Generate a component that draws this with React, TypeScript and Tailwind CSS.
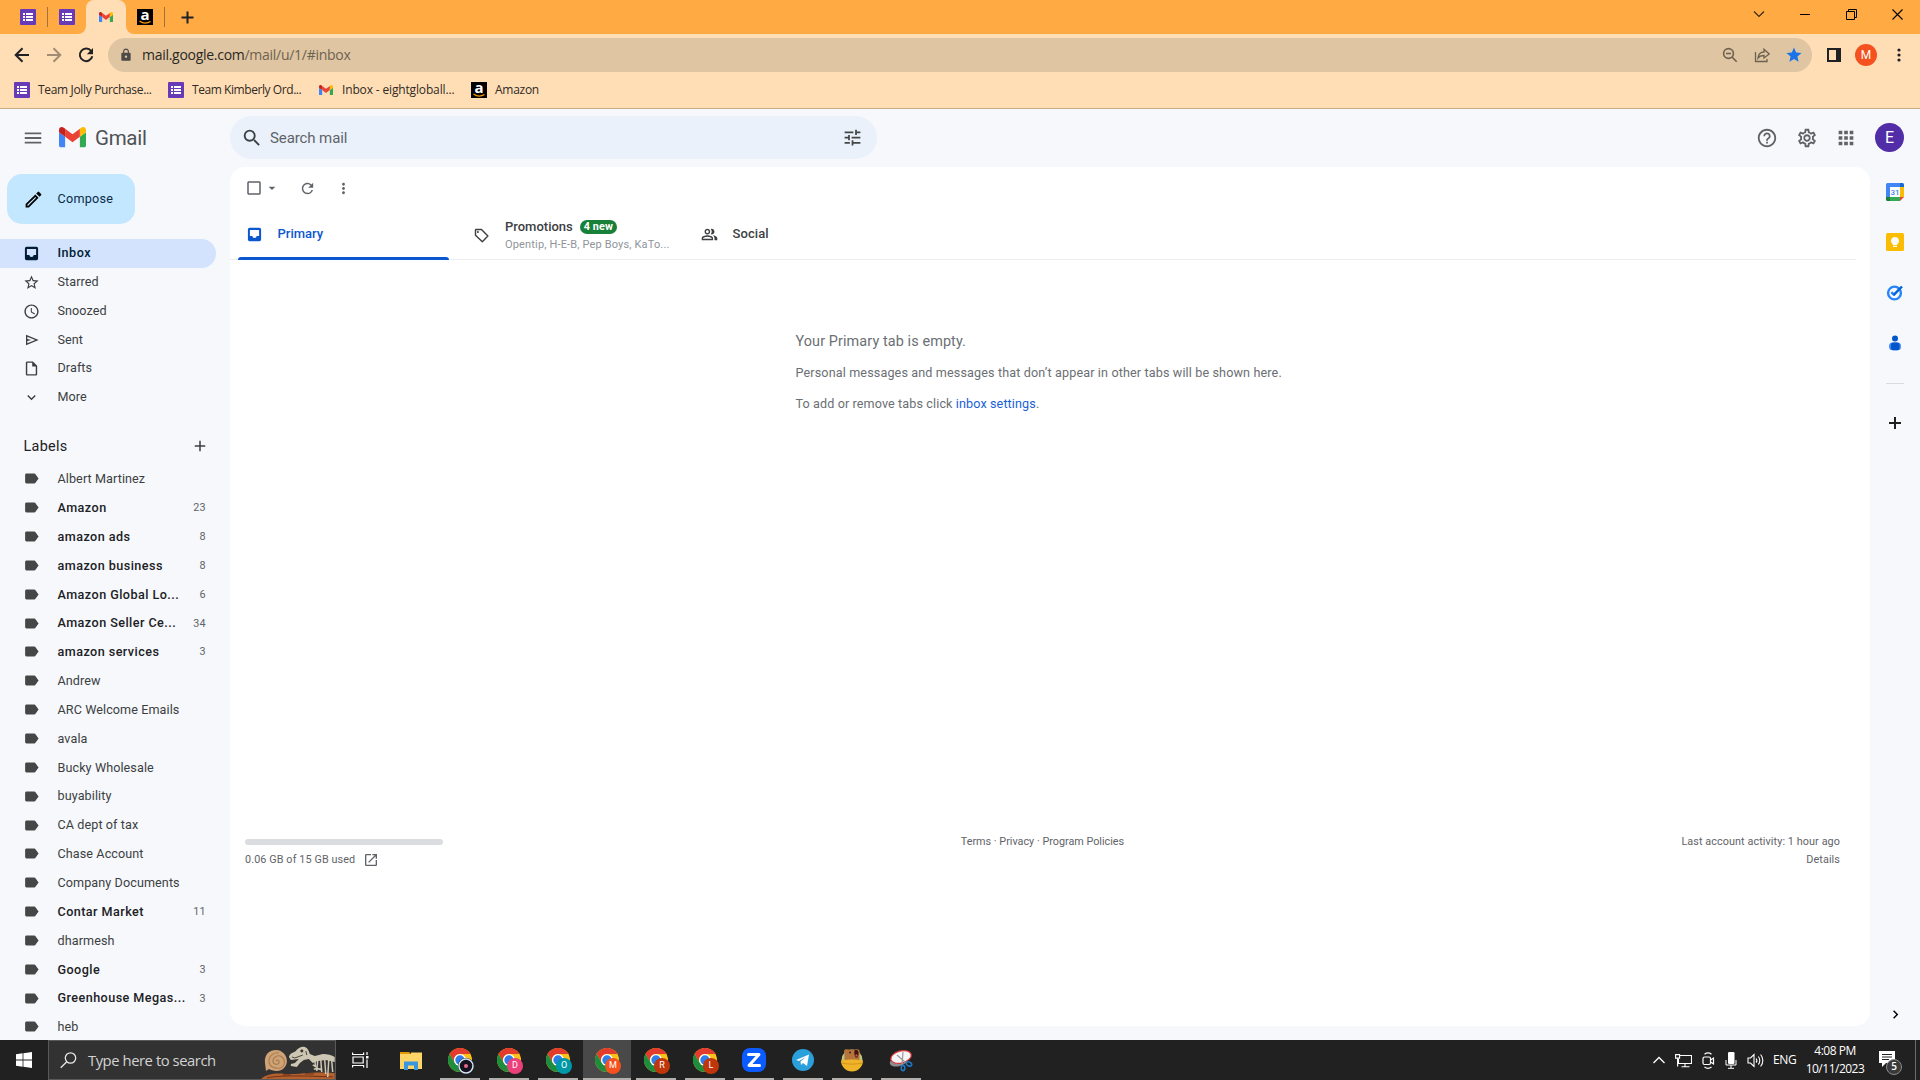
import { clsx } from "clsx";
import type { ReactNode } from "react";
import {
  MdAdd,
  MdApps,
  MdArrowDropDown,
  MdCheckBoxOutlineBlank,
  MdChevronRight,
  MdExpandMore,
  MdHelpOutline,
  MdLabel,
  MdLock,
  MdMenu,
  MdMoreVert,
  MdOutlineInsertDriveFile,
  MdOutlinePeopleAlt,
  MdOutlineSettings,
  MdRefresh,
  MdSearch,
  MdOutlineSchedule,
  MdStar,
  MdStarBorder,
  MdTune,
  MdOpenInNew,
  MdOutlineModeEdit,
} from "react-icons/md";

interface Label {
  name: string;
  count?: number;
}

const labels: Label[] = [
  { name: "Albert Martinez" },
  { name: "Amazon", count: 23 },
  { name: "amazon ads", count: 8 },
  { name: "amazon business", count: 8 },
  { name: "Amazon Global Lo...", count: 6 },
  { name: "Amazon Seller Ce...", count: 34 },
  { name: "amazon services", count: 3 },
  { name: "Andrew" },
  { name: "ARC Welcome Emails" },
  { name: "avala" },
  { name: "Bucky Wholesale" },
  { name: "buyability" },
  { name: "CA dept of tax" },
  { name: "Chase Account" },
  { name: "Company Documents" },
  { name: "Contar Market", count: 11 },
  { name: "dharmesh" },
  { name: "Google", count: 3 },
  { name: "Greenhouse Megas...", count: 3 },
  { name: "heb" },
];

const folders = [
  { name: "Starred", icon: <MdStarBorder size={17} /> },
  { name: "Snoozed", icon: <MdOutlineSchedule size={17} /> },
  { name: "Sent", icon: <SendIcon /> },
  { name: "Drafts", icon: <MdOutlineInsertDriveFile size={17} /> },
  { name: "More", icon: <MdExpandMore size={17} /> },
];

const chromeProfiles = [
  { letter: "", color: "#15131f" },
  { letter: "D", color: "#ec407a" },
  { letter: "O", color: "#0097a7" },
  { letter: "M", color: "#f4511e", active: true },
  { letter: "R", color: "#bf360c" },
  { letter: "L", color: "#bf360c" },
];

export default function App() {
  return (
    <div className="flex h-[1080px] w-[1920px] flex-col overflow-hidden bg-[#f6f8fc] font-[Roboto,sans-serif]">
      <TabStrip />
      <Toolbar />
      <BookmarkBar />
      <div className="flex h-[931px] flex-col overflow-hidden">
        <GmailHeader />
        <div className="flex h-[873px]">
          <Sidebar />
          <MailPanel />
          <SidePanel />
        </div>
      </div>
      <Taskbar />
    </div>
  );
}

/* ---------- browser chrome ---------- */

function TabStrip() {
  return (
    <div className="flex h-[34px] shrink-0 items-start justify-between bg-[#ffaa42]">
      <div className="flex h-[34px] items-center">
        <div className="ml-5 w-4">
          <FormsIcon />
        </div>
        <div className="ml-[11px] h-5 w-px bg-[#a07440]" />
        <div className="ml-[11px] w-4">
          <FormsIcon />
        </div>
        <div className="relative ml-[11px] flex h-[34px] w-10 items-center justify-center rounded-t-lg bg-[#ffdeb6]">
          <svg className="absolute bottom-0 -left-2" width="8" height="8">
            <path d="M8 0v8H0a8 8 0 0 0 8-8" fill="#ffdeb6" />
          </svg>
          <GmailLogo width={14} />
          <svg className="absolute -right-2 bottom-0" width="8" height="8">
            <path d="M0 0v8h8a8 8 0 0 1-8-8" fill="#ffdeb6" />
          </svg>
        </div>
        <div className="ml-[11px]">
          <AmazonIcon />
        </div>
        <div className="ml-[11px] h-5 w-px bg-[#a07440]" />
        <svg className="ml-[15.500px]" width="13" height="13" stroke="#202124" strokeWidth="2">
          <path d="M6.500 .5v12M.5 6.500h12" />
        </svg>
      </div>
      <div className="mr-[17px] flex h-7 items-center text-black">
        <svg width="12" height="12" fill="none" stroke="#3b2a12" strokeWidth="1.200">
          <path d="M1 3.500l5 5 5-5" />
        </svg>
        <svg className="ml-[35px]" width="10" height="10" stroke="#000">
          <path d="M0 5.500h10" />
        </svg>
        <svg className="ml-9" width="11" height="11" fill="none" stroke="#000">
          <path d="M.5 2.500h8v8h-8zM2.500 2.500v-2h8v8h-2" />
        </svg>
        <svg className="ml-[35px]" width="11" height="11" stroke="#000" strokeWidth="1.100">
          <path d="M.5 .5l10 10M10.500 .5l-10 10" />
        </svg>
      </div>
    </div>
  );
}

function Toolbar() {
  return (
    <div className="flex h-[42px] shrink-0 items-center bg-[#ffdeb6]">
      <svg className="ml-3.5" width="16" height="16" fill="none" stroke="#202124" strokeWidth="2">
        <path d="M15 8H2M8.500 1.200L1.700 8l6.800 6.800" />
      </svg>
      <svg className="ml-4" width="16" height="16" fill="none" stroke="#a18c73" strokeWidth="2">
        <path d="M1 8h13M7.500 1.200L14.300 8l-6.800 6.800" />
      </svg>
      <svg className="ml-4" width="16" height="16" fill="none" stroke="#202124" strokeWidth="2">
        <path d="M13.200 4A6.300 6.300 0 1 0 14.300 9.300" />
        <path d="M15 1v6.200H8.800z" fill="#202124" stroke="none" />
      </svg>
      <div className="ml-[14px] flex h-[34px] w-[1704px] items-center rounded-full bg-[#dfc5a1] pr-[9px] pl-[11px]">
        <MdLock size={14} className="text-[#4d4a47]" />
        <p className="ml-[9px] flex-1 font-['Open_Sans',sans-serif] text-sm tracking-[-0.280px] text-[#2a2825]">
          mail.google.com<span className="text-[#6d6252]">/mail/u/1/#inbox</span>
        </p>
        <svg width="16" height="16" fill="none" stroke="#6d6252" strokeWidth="1.600">
          <circle cx="6.500" cy="6.500" r="4.900" />
          <path d="M10 10l4.700 4.700M4 6.500h5" />
        </svg>
        <svg className="ml-[16px]" width="17" height="16" fill="none" stroke="#6d6252" strokeWidth="1.300">
          <path d="M1.500 5v9.500h11.500v-2.500" />
          <path d="M4 11c.5-4 3-6 6-6V2.200L15.200 7 10 11V8.500C7.500 8.500 5.500 9 4 11z" />
        </svg>
        <MdStar size={18} className="ml-[14px] text-[#1a73e8]" />
      </div>
      <svg className="ml-[15px]" width="14" height="14">
        <path d="M1 1h12v12H1z" fill="none" stroke="#202124" strokeWidth="2" />
        <path d="M9 0h5v14H9z" fill="#202124" />
      </svg>
      <div className="ml-3.5 flex size-[22px] items-center justify-center rounded-full bg-[#f4511e] text-xs text-white">
        M
      </div>
      <svg className="ml-[20px]" width="4" height="14" fill="#202124">
        <circle cx="2" cy="2" r="1.600" />
        <circle cx="2" cy="7" r="1.600" />
        <circle cx="2" cy="12" r="1.600" />
      </svg>
    </div>
  );
}

function BookmarkBar() {
  return (
    <div className="flex h-[33px] shrink-0 items-center border-b border-[#c9ab84] bg-[#ffdeb6] pb-1 font-['Open_Sans',sans-serif] text-xs text-[#2f2a24]">
      <Bookmark className="ml-3.5 w-[138px] tracking-[-0.340px]" icon={<FormsIcon />}>
        Team Jolly Purchase...
      </Bookmark>
      <Bookmark className="ml-4 w-[134px] tracking-[-0.430px]" icon={<FormsIcon />}>
        Team Kimberly Ord...
      </Bookmark>
      <Bookmark className="ml-4 w-[137px] tracking-[-0.150px]" icon={<GmailLogo width={14} />}>
        Inbox - eightgloball...
      </Bookmark>
      <Bookmark className="ml-4 tracking-[-0.270px]" icon={<AmazonIcon />}>
        Amazon
      </Bookmark>
    </div>
  );
}

function Bookmark({ icon, className, children }: { icon: ReactNode; className: string; children: ReactNode }) {
  return (
    <div className={clsx("flex items-center gap-2 whitespace-nowrap", className)}>
      <div className="flex w-4 shrink-0 justify-center">{icon}</div>
      {children}
    </div>
  );
}

/* ---------- gmail ---------- */

function GmailHeader() {
  return (
    <header className="flex h-[58px] shrink-0 items-center pb-px text-[#5f6368]">
      <MdMenu size={22} className="ml-[22px]" />
      <div className="ml-[15px]">
        <GmailLogo width={27} />
      </div>
      <span className="ml-[9px] w-[135px] pt-0.5 text-[20.500px] tracking-[-0.300px] text-[#4f5256]">Gmail</span>
      <div className="flex h-[43px] w-[647px] items-center rounded-full bg-[#eaf1fb] pr-[14px] pl-[11px]">
        <MdSearch size={22} className="text-[#3c4043]" />
        <span className="ml-[7px] flex-1 pt-0.5 text-[15px] tracking-[-0.100px] text-[#5f6368]">Search mail</span>
        <MdTune size={21} className="text-[#444746]" />
      </div>
      <MdHelpOutline size={22} className="ml-[879px]" />
      <MdOutlineSettings size={22} className="ml-[18px]" />
      <MdApps size={22} className="ml-[17px]" />
      <div className="ml-[18px] flex size-[29px] items-center justify-center rounded-full bg-[#512da8] text-[16px] text-white">
        E
      </div>
    </header>
  );
}

function Sidebar() {
  return (
    <aside className="w-[230px] shrink-0 overflow-hidden pt-[7px] text-[12.600px] text-[#3c3f42]">
      <button className="ml-[7px] flex h-[50px] w-32 items-center rounded-[15px] bg-[#c2e7ff] pl-[15.500px] text-[#0b2c48]">
        <MdOutlineModeEdit size={21} className="text-black" />
        <span className="ml-3.5 tracking-[0.250px]">Compose</span>
      </button>
      <div className="mt-[15px] flex h-[29px] w-[216px] items-center rounded-r-full bg-[#d3e3fd] pl-[23px] font-medium text-[#001d35]">
        <InboxIcon />
        <span className="ml-[17.500px] tracking-[0.500px]">Inbox</span>
      </div>
      {folders.map((folder) => (
        <div key={folder.name} className="flex h-[28.800px] items-center pl-[23px]">
          <span className="flex w-[17px] justify-center">{folder.icon}</span>
          <span className="ml-[17.500px] tracking-[0.080px]">{folder.name}</span>
        </div>
      ))}
      <div className="mt-[19.500px] flex h-[30px] items-center justify-between pr-[21px] pl-[23.500px]">
        <span className="text-[14.400px] tracking-[0.300px] text-[#202124]">Labels</span>
        <MdAdd size={18} />
      </div>
      <div className="mt-[3px]">
        {labels.map((label) => (
          <div
            key={label.name}
            className={clsx(
              "flex h-[28.850px] items-center pr-[24.500px] pl-[23px]",
              label.count && "font-medium text-[#202124]"
            )}
          >
            <MdLabel size={17} className="text-[#444746]" />
            <span
              className={clsx(
                "ml-[17.500px] flex-1 pt-[1.500px] whitespace-nowrap",
                label.count ? "tracking-[0.450px]" : "tracking-[0.090px]"
              )}
            >
              {label.name}
            </span>
            {label.count && (
              <span className="pt-px text-[10.800px] font-normal text-[#5f6368]">{label.count}</span>
            )}
          </div>
        ))}
      </div>
    </aside>
  );
}

function MailPanel() {
  return (
    <main className="flex h-[859px] w-[1640px] shrink-0 flex-col rounded-[15px] bg-white">
      <div className="flex h-[42px] items-center text-[#5f6368]">
        <MdCheckBoxOutlineBlank size={18} className="ml-[15px]" />
        <MdArrowDropDown size={16} className="ml-[1px]" />
        <MdRefresh size={17} className="ml-[19px]" />
        <MdMoreVert size={17} className="ml-[19px]" />
      </div>
      <div className="mr-3.5 flex h-[51px] border-b border-[#eceff1] pl-2 text-[13px] text-[#3c4043]">
        <div className="mr-4 flex h-[51px] w-[211px] shrink-0 flex-col text-[#0b57d0]">
          <div className="flex h-12 items-center pt-0.5 pl-[7.500px]">
            <InboxIcon />
            <span className="ml-[15px] font-medium">Primary</span>
          </div>
          <div className="h-[3px] rounded-t-sm bg-[#0b57d0]" />
        </div>
        <div className="flex h-[51px] w-[228px] items-center pt-px pl-2">
          <TagIcon />
          <div className="ml-[15px]">
            <div className="flex h-[18px] items-center gap-[7px]">
              <span className="font-medium">Promotions</span>
              <span className="h-3.5 rounded-full bg-[#188038] px-1 text-[10.800px] leading-[14px] font-bold tracking-[0.100px] text-white">
                4 new
              </span>
            </div>
            <p className="h-[17px] text-[11px] leading-[17px] tracking-[0.160px] whitespace-nowrap text-[#90959a]">
              Opentip, H-E-B, Pep Boys, KaTo...
            </p>
          </div>
        </div>
        <div className="flex h-12 items-center pt-px pl-[7.500px]">
          <MdOutlinePeopleAlt size={17} className="mt-0.5" />
          <span className="ml-[15px] font-medium tracking-[0.100px]">Social</span>
        </div>
      </div>
      <div className="mt-[66px] ml-[565.500px] h-[507px] text-[12.600px] tracking-[0.130px] text-[#6b6f73]">
        <p className="h-[31px] text-[14.400px] leading-[31px] tracking-[0.110px]">Your Primary tab is empty.</p>
        <p className="h-[31px] leading-[31px]">
          Personal messages and messages that don’t appear in other tabs will be shown here.
        </p>
        <p className="h-[31px] leading-[31px] tracking-[0.110px]">
          To add or remove tabs click <a className="text-[#1a5fd6]">inbox settings</a>.
        </p>
      </div>
      <footer className="grid grid-cols-[534px_1fr_534px] pr-[30px] pl-[15px] text-[10.800px] leading-[18px] text-[#5f6368]">
        <div>
          <div className="mt-[6px] h-1.5 w-[198px] rounded-full bg-[#dadce0]" />
          <div className="mt-[6px] flex items-center gap-2 tracking-[0.110px]">
            0.06 GB of 15 GB used
            <MdOpenInNew size={16} />
          </div>
        </div>
        <p className="text-center">Terms · Privacy · Program Policies</p>
        <div className="text-right">
          <p className="tracking-[0.090px]">Last account activity: 1 hour ago</p>
          <p className="tracking-[0.090px]">Details</p>
        </div>
      </footer>
    </main>
  );
}

function SidePanel() {
  return (
    <aside className="flex flex-1 flex-col items-center pt-4">
      {/* Calendar */}
      <svg width="18" height="18" viewBox="0 0 18 18">
        <path d="M1.500 0H14v4H4v10H0V1.500A1.500 1.500 0 0 1 1.500 0z" fill="#4285f4" />
        <path d="M14 0h2.500A1.500 1.500 0 0 1 18 1.500V4h-4z" fill="#1967d2" />
        <path d="M14 4h4v10h-4z" fill="#fbbc04" />
        <path d="M4 14h10v4H4z" fill="#34a853" />
        <path d="M0 14h4v4H1.500A1.500 1.500 0 0 1 0 16.500z" fill="#188038" />
        <path d="M14 14h4l-4 4z" fill="#ea4335" />
        <path d="M4 4h10v10H4z" fill="#fff" />
        <text x="9" y="12" textAnchor="middle" fontSize="8" fontWeight="500" fill="#4285f4">
          31
        </text>
      </svg>
      {/* Keep */}
      <svg className="mt-8" width="18" height="18" viewBox="0 0 18 18">
        <rect width="18" height="18" rx="1.500" fill="#fbbc04" />
        <path d="M9 4a4 4 0 0 0-2.200 7.300V12h4.400v-.7A4 4 0 0 0 9 4zM7 12.700h4V14H7z" fill="#fff" />
      </svg>
      {/* Tasks */}
      <svg className="mt-8" width="18" height="18" viewBox="0 0 18 18" fill="none">
        <circle cx="8.500" cy="10" r="6.400" stroke="#2684fc" strokeWidth="2.400" />
        <path d="M5.300 9.200l3.200 3" stroke="#2684fc" strokeWidth="2.500" />
        <path d="M7.500 12.200L16 3.500" stroke="#0066da" strokeWidth="2.500" />
      </svg>
      {/* Contacts */}
      <svg className="mt-[33px]" width="18" height="18" viewBox="0 0 18 18">
        <circle cx="9" cy="4.500" r="3" fill="#0057cc" />
        <rect x="3" y="8.500" width="12" height="7.800" rx="3.500" fill="#4c8bf5" />
        <rect x="5" y="8.500" width="8.500" height="7.800" rx="2.500" fill="#0057cc" />
      </svg>
      <div className="mt-[31px] h-px w-[18px] bg-[#dadce0]" />
      <svg className="mt-[33px]" width="12" height="12" stroke="#1f1f1f" strokeWidth="2">
        <path d="M6 0v12M0 6h12" />
      </svg>
      <MdChevronRight size={17} className="mt-[577px] text-black" />
    </aside>
  );
}

/* ---------- windows taskbar ---------- */

function Taskbar() {
  return (
    <div className="flex h-10 shrink-0 items-center bg-[#222121] text-white">
      <svg className="ml-4" width="16" height="16" fill="#fff">
        <path d="M0 2.200L6.600 1.300v6.300H0zM7.400 1.200L16 0v7.600H7.400zM0 8.400h6.600v6.300L0 13.800zM7.400 8.400H16V16l-8.600-1.200z" />
      </svg>
      <div className="ml-4 flex h-10 w-[288px] items-center border border-[#5a5a5a] bg-[#333232] pl-[11px]">
        <svg width="17" height="17" fill="none" stroke="#e8e8e8" strokeWidth="1.300">
          <circle cx="10.500" cy="6" r="5.200" />
          <path d="M6.800 9.700L.7 15.800" />
        </svg>
        <span className="ml-[11px] w-[174px] font-['Open_Sans',sans-serif] text-[14.800px] tracking-[-0.440px] text-[#d2d2d2]">
          Type here to search
        </span>
        <FossilArt />
      </div>
      <div className="flex w-[54px] justify-center pr-1.5">
        <svg width="17" height="16" fill="none" stroke="#fff" strokeWidth="1.200">
          <path d="M.6 3V.6M.6 2.500h11M11.600 3V.6M1 5h10.200v6H1zM.6 15.500V13.500h11v2M15 0v3M15 7.500V16" />
          <path d="M14 4h2.500v2.500H14z" fill="#fff" stroke="none" />
        </svg>
      </div>
      <div className="flex w-[42px] justify-center">
        <svg width="22" height="19" viewBox="0 0 22 19">
          <path d="M0 1h9l2 2H0z" fill="#e19a00" />
          <path d="M0 3h11V1.500h11V18H0z" fill="#ffd567" />
          <path d="M4 10.500h14V19h-4v-4.500H8V19H4z" fill="#3a96dd" />
        </svg>
      </div>
      <div className="ml-1 flex items-end">
        {chromeProfiles.map((profile, i) => (
          <TaskbarApp key={i} active={profile.active}>
            <div className="relative size-6">
              <ChromeIcon />
              <span
                className="absolute -right-[2px] -bottom-[2px] flex size-4 items-center justify-center rounded-full text-[9px] text-white"
                style={{ backgroundColor: profile.color }}
              >
                {profile.letter || (
                  <svg width="16" height="16">
                    <circle cx="8" cy="8" r="7" fill="#15131f" stroke="#cfe3f5" strokeWidth="1.500" />
                    <circle cx="8" cy="8" r="2" fill="#e86a8a" />
                  </svg>
                )}
              </span>
            </div>
          </TaskbarApp>
        ))}
        <TaskbarApp>
          <svg width="24" height="24">
            <rect width="24" height="24" rx="8" fill="#0b5cff" />
            <path d="M6.500 6.500h10.500L7 17.500h10.500" fill="none" stroke="#fff" strokeWidth="3" strokeLinejoin="round" strokeLinecap="round" />
          </svg>
        </TaskbarApp>
        <TaskbarApp>
          <svg width="22" height="22">
            <circle cx="11" cy="11" r="11" fill="#2a9fdb" />
            <path d="M4 11L17 5.500 15 17l-4-3-2 2-.5-3.500L14 8l-7 4z" fill="#fff" />
          </svg>
        </TaskbarApp>
        <TaskbarApp>
          <svg width="24" height="24">
            <circle cx="12" cy="12" r="10.500" fill="#b9c77a" />
            <path d="M4.500 13V5C3 2 5.500 .5 8 1.500h8C18 .5 20.500 2 19.500 5v8z" fill="#b5743a" />
            <path d="M14.500 2.500c3-1.500 4.500 .5 4 3.500s-1 4-2.500 3.500-2-5-1.500-7z" fill="#3f1512" />
            <path d="M15.500 6.500h2v2h-2z" fill="#d8564a" />
            <circle cx="10" cy="4.500" r=".9" fill="#3b1d0d" />
            <path d="M1 12.500c6-1.500 16-1.500 22 0a11 11 0 0 1-22 0z" fill="#f0b429" />
            <path d="M2 15c6 1.500 14 1.500 20 0" fill="none" stroke="#d3951a" />
          </svg>
        </TaskbarApp>
        <TaskbarApp>
          <svg width="24" height="24">
            <ellipse cx="10" cy="13" rx="9.500" ry="5" fill="#8d8d8d" transform="rotate(-18 10 13)" />
            <ellipse cx="12" cy="9" rx="10.500" ry="6" fill="#f5f5f5" stroke="#d63a3a" strokeWidth="1.200" transform="rotate(-15 12 9)" />
            <path d="M8 7l9 8M14 4l-1 13" stroke="#9a9a9a" strokeWidth="1.200" />
            <ellipse cx="14" cy="20" rx="1.800" ry="2.600" fill="none" stroke="#1d77c4" strokeWidth="1.600" />
            <ellipse cx="20" cy="16" rx="2.800" ry="1.900" fill="none" stroke="#1d77c4" strokeWidth="1.600" transform="rotate(25 20 16)" />
          </svg>
        </TaskbarApp>
      </div>
      <SystemTray />
    </div>
  );
}

function TaskbarApp({ active, children }: { active?: boolean; children: ReactNode }) {
  return (
    <div className={clsx("mr-px flex h-10 w-12 flex-col items-center", active && "bg-[#4a4949]")}>
      <div className="flex h-[38px] items-center pt-0.5">{children}</div>
      <div className={clsx("h-0.5 bg-[#b3afac]", active ? "w-12" : "w-10")} />
    </div>
  );
}

function SystemTray() {
  return (
    <div className="ml-auto flex h-10 items-center font-['Open_Sans',sans-serif] text-xs">
      <svg width="12" height="8" fill="none" stroke="#fff" strokeWidth="1.300">
        <path d="M.5 7L6 1.500 11.500 7" />
      </svg>
      <svg className="ml-2.5" width="17" height="15" fill="none" stroke="#fff" strokeWidth="1.100">
        <path d="M5 2.500h11.500v8H3.500V6M10 10.500v3M6.500 13.800h8M.6 1.600h4v3.500h-4zM2.600 5v8.500" />
      </svg>
      <svg className="ml-2.5" width="13" height="17" fill="none" stroke="#fff" strokeWidth="1.200">
        <rect x="1" y="5" width="7.500" height="7.500" rx="1.500" />
        <path d="M8.500 8l3-2v6l-3-2M2.500 2.200c2-1.500 5-1.500 7 0M2.500 15c2 1.500 5 1.500 7 0" />
      </svg>
      <svg className="ml-2.5" width="12" height="17">
        <rect x="3" y="0" width="6.500" height="12" rx="1.200" fill="#fff" />
        <path d="M1 8v5h10V8M6 13v3M3 16.300h6" fill="none" stroke="#fff" />
      </svg>
      <svg className="ml-2.5" width="18" height="15" fill="none" stroke="#fff" strokeWidth="1.100">
        <path d="M1 5h2.500L7 1.500v12L3.500 10H1zM9 5.500c1 1.200 1 3 0 4M11.300 3.500c2 2.200 2 6 0 8M13.600 1.500c3 3.500 3 8.500 0 12" />
      </svg>
      <span className="ml-2 w-[25px] tracking-[-0.400px]">ENG</span>
      <div className="ml-[7px] flex w-[60px] flex-col items-center leading-[18px] tracking-[-0.500px] whitespace-nowrap">
        <span>4:08 PM</span>
        <span>10/11/2023</span>
      </div>
      <div className="relative ml-[13px] h-5 w-[37px]">
        <svg width="18" height="18" viewBox="0 0 18 18">
          <path d="M1 1h16v12H8l-4 4v-4H1z" fill="#fff" />
          <path d="M4 4.500h10M4 7h10M4 9.500h7" stroke="#222121" />
        </svg>
        <span className="absolute top-[9px] left-2 flex size-4 items-center justify-center rounded-full border border-[#8c8c8c] bg-[#3b3a3a] text-[10px] font-semibold">
          5
        </span>
      </div>
      <div className="mr-1 h-10 w-px bg-[#6d6c6c]" />
    </div>
  );
}

/* ---------- drawings ---------- */

function InboxIcon() {
  return (
    <svg width="17" height="17" viewBox="0 0 24 24" fill="currentColor">
      <path
        fillRule="evenodd"
        d="M5 2.500h14a2.300 2.300 0 0 1 2.300 2.300v14.400a2.300 2.300 0 0 1-2.300 2.300H5a2.300 2.300 0 0 1-2.300-2.300V4.800A2.300 2.300 0 0 1 5 2.500zM5.500 5.500v8.500H9a3 3 0 0 0 6 0h3.500V5.500z"
      />
    </svg>
  );
}

function SendIcon() {
  return (
    <svg width="16" height="16" viewBox="0 0 24 24" fill="currentColor">
      <path d="M3 20V4l19 8zm2-3l11.850-5L5 7v3.500l6 1.500-6 1.500z" />
    </svg>
  );
}

function TagIcon() {
  return (
    <svg width="17" height="17" viewBox="0 0 24 24" fill="none" stroke="currentColor" strokeWidth="2" strokeLinejoin="round">
      <path d="M3.500 4.500a1 1 0 0 1 1-1H12l9 9.200-7.800 8L3.500 11.500z" />
      <circle cx="7" cy="7" r="1.400" fill="currentColor" stroke="none" />
    </svg>
  );
}

function FormsIcon() {
  return (
    <svg width="16" height="16">
      <rect width="16" height="16" rx="1" fill="#673ab7" />
      <path d="M3 4h2v2H3zM6 4h7v2H6zM3 7h2v2H3zM6 7h7v2H6zM3 10h2v2H3zM6 10h7v2H6z" fill="#fff" />
    </svg>
  );
}

function AmazonIcon() {
  return (
    <svg className="overflow-visible" width="16" height="16">
      <path d="M0 0h16v16H0z" fill="#000" />
      <text x="8" y="10.500" textAnchor="middle" fontSize="15" fontWeight="700" fill="#fff" fontFamily="Open Sans">
        a
      </text>
      <path d="M2.500 12c3.500 2.600 7.500 2.600 11 .5" fill="none" stroke="#f90" strokeWidth="1.300" />
    </svg>
  );
}

function GmailLogo({ width }: { width: number }) {
  return (
    <svg width={width} height={width * 0.75} viewBox="52 42 88 66">
      <path fill="#4285f4" d="M58 108h14V74L52 59v43c0 3.320 2.690 6 6 6" />
      <path fill="#34a853" d="M120 108h14c3.320 0 6-2.690 6-6V59l-20 15" />
      <path fill="#fbbc04" d="M120 48v26l20-15v-8c0-7.420-8.470-11.650-14.400-7.200" />
      <path fill="#ea4335" d="M72 74V48l24 18 24-18v26L96 92" />
      <path fill="#c5221f" d="M52 51v8l20 15V48l-5.600-4.200c-5.940-4.450-14.400-.22-14.400 7.200" />
    </svg>
  );
}

function ChromeIcon() {
  return (
    <svg width="24" height="24" viewBox="0 0 24 24">
      <circle cx="12" cy="12" r="12" fill="#fbc116" />
      <path d="M1.600 6A12 12 0 0 1 22.400 6H12a6 6 0 0 0-5.200 9z" fill="#e33b2e" />
      <path d="M1.600 6A12 12 0 0 0 12 24l5.200-9H6.800z" fill="#1e8e3e" />
      <circle cx="12" cy="12" r="6" fill="#fff" />
      <circle cx="12" cy="12" r="4.700" fill="#2f7de9" />
    </svg>
  );
}

// ammonite and dinosaur skeleton at the end of the search box
function FossilArt() {
  return (
    <svg width="74" height="38" viewBox="0 0 74 38">
      <path d="M0 38c6-5 14-6 24-5s30-3 50-1v6z" fill="#b5602f" />
      <path d="M6 37c12-3 40-2 66-1M22 34h8M44 33h9" fill="none" stroke="#6e3115" />
      <path d="M4 22C3 13 9 9 15 9s11 5 11 11-5 10-10 10c-4 0-6-1-8-2l-3 2z" fill="#cfa374" />
      <path d="M15 20c2-2 4 0 3 2s-6 2-6-2 5-7 9-4 3 10-2 11-11-1-11-7 6-9 10-8" fill="none" stroke="#a67a55" strokeWidth="1.100" />
      <path d="M28 16c1-4 4-4 7-6 2-3 6-5 9-4s4 4 5 7l5 2 8-2c5 0 9 1 12 3v5l-9-2-8 1-5 2-4-4-5 1-4 3-3 4-6-1 0-2 4-1 4-4-8 1z" fill="#cdc6b2" />
      <path d="M54 19l1 9M57 19l-1 11M60 19l1 12M64 19l1 14M68 19l-1 17M71 20l1 11M52 24l8 5M53 28h7" stroke="#cfc7b2" strokeWidth="1.500" />
      <circle cx="41" cy="10" r="1.500" fill="#3c372e" />
      <path d="M31 16l3 1 8-3M45 10l1 4" fill="none" stroke="#4a4439" />
    </svg>
  );
}
